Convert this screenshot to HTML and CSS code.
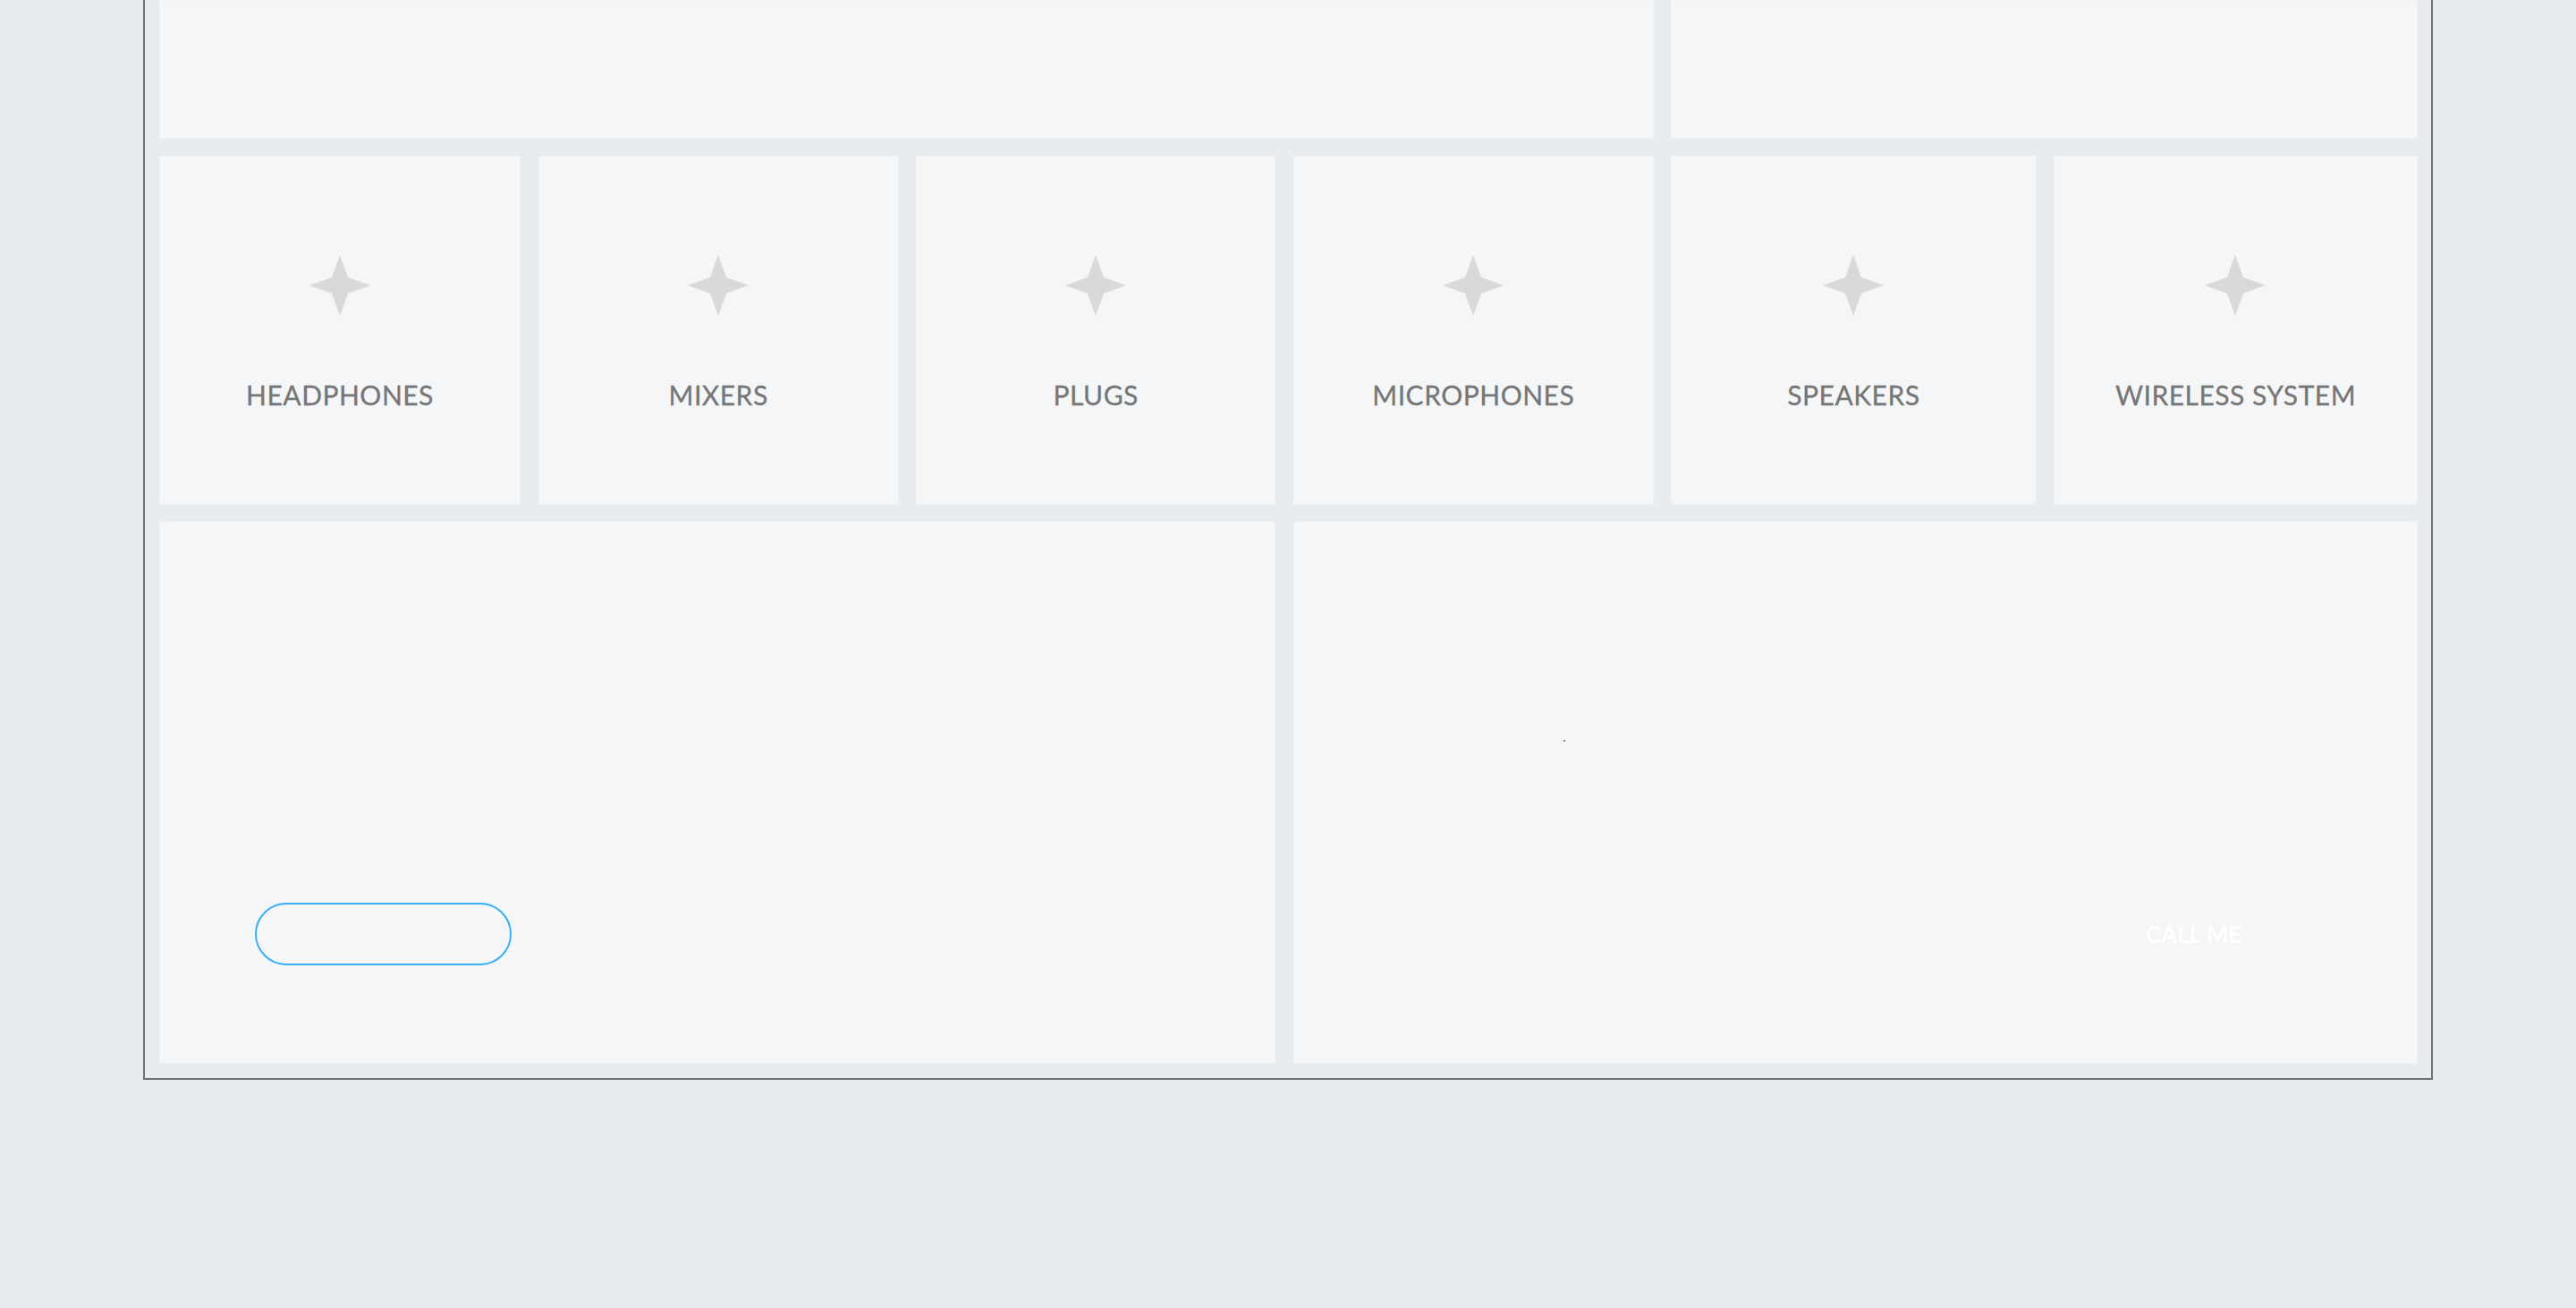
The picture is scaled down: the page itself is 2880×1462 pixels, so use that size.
FILE: index.html
```html
<!DOCTYPE html>
<html lang="en">
<head>
  <meta charset="UTF-8">
  <title>Categories</title>
  <link rel="stylesheet" href="styles.css">
</head>
<body>
  <div class="frame">
    <div class="grid">
      <div class="cell top-wide"></div>
      <div class="cell top-narrow"></div>

      <div class="cell category">
        <svg class="star" viewBox="0 0 68 68"><path d="M34 0 L43 25 L68 34 L43 43 L34 68 L25 43 L0 34 L25 25 Z"/></svg>
        <span class="label">HEADPHONES</span>
      </div>
      <div class="cell category">
        <svg class="star" viewBox="0 0 68 68"><path d="M34 0 L43 25 L68 34 L43 43 L34 68 L25 43 L0 34 L25 25 Z"/></svg>
        <span class="label">MIXERS</span>
      </div>
      <div class="cell category">
        <svg class="star" viewBox="0 0 68 68"><path d="M34 0 L43 25 L68 34 L43 43 L34 68 L25 43 L0 34 L25 25 Z"/></svg>
        <span class="label">PLUGS</span>
      </div>
      <div class="cell category">
        <svg class="star" viewBox="0 0 68 68"><path d="M34 0 L43 25 L68 34 L43 43 L34 68 L25 43 L0 34 L25 25 Z"/></svg>
        <span class="label">MICROPHONES</span>
      </div>
      <div class="cell category">
        <svg class="star" viewBox="0 0 68 68"><path d="M34 0 L43 25 L68 34 L43 43 L34 68 L25 43 L0 34 L25 25 Z"/></svg>
        <span class="label">SPEAKERS</span>
      </div>
      <div class="cell category">
        <svg class="star" viewBox="0 0 68 68"><path d="M34 0 L43 25 L68 34 L43 43 L34 68 L25 43 L0 34 L25 25 Z"/></svg>
        <span class="label">WIRELESS SYSTEM</span>
      </div>

      <div class="cell promo promo-left">
        <button class="btn btn-outline"></button>
      </div>
      <div class="cell promo promo-right">
        <span class="dot"></span>
        <button class="btn btn-call">CALL ME</button>
      </div>
    </div>
  </div>
</body>
</html>
```

FILE: styles.css
```css
body {
  margin: 0;
  background-color: #e8ecef;
  font-family: Lato, "Noto Sans", sans-serif;
}

.frame {
  width: 2560px;
  margin: 0 auto;
  box-sizing: border-box;
  border: 2px solid #6f7271;
  border-top: none;
  padding: 0 15px 16px 16px;
}

.grid {
  display: grid;
  grid-template-columns: 404fr 403fr 402fr 403fr 408fr 407fr;
  column-gap: 19.6px;
  row-gap: 19px;
}

.cell {
  background: #f5f6f8;
  box-shadow: inset 0 0 0 1px #f0f2f4;
}

.top-wide {
  grid-column: span 4;
  height: 155px;
}

.top-narrow {
  grid-column: span 2;
  height: 155px;
}

.category {
  height: 390px;
  display: flex;
  flex-direction: column;
  align-items: center;
  padding-top: 111px;
  box-sizing: border-box;
}

.star {
  width: 68px;
  height: 68px;
  fill: #d9d9d9;
}

.label {
  margin-top: 73px;
  font-size: 30px;
  line-height: 30px;
  color: #767676;
  letter-spacing: 0.5px;
  -webkit-text-stroke: 0.3px #767676;
}

.promo {
  grid-column: span 3;
  height: 606px;
  display: flex;
  flex-direction: column;
  padding-bottom: 110px;
  box-sizing: border-box;
}

.btn {
  margin-top: auto;
  width: 287px;
  height: 70px;
  border-radius: 35px;
  font-family: Lato, "Noto Sans", sans-serif;
  font-size: 26px;
  font-weight: bold;
  cursor: pointer;
}

.btn-outline {
  align-self: flex-start;
  margin-left: 107px;
  background: transparent;
  border: 2px solid #3aaff5;
}

.btn-call {
  align-self: flex-end;
  margin-right: 107px;
  background: transparent;
  border: none;
  color: #ffffff;
}

.dot {
  width: 2px;
  height: 2px;
  margin: 244px 0 0 302px;
  background: #8a8a8a;
}
```
